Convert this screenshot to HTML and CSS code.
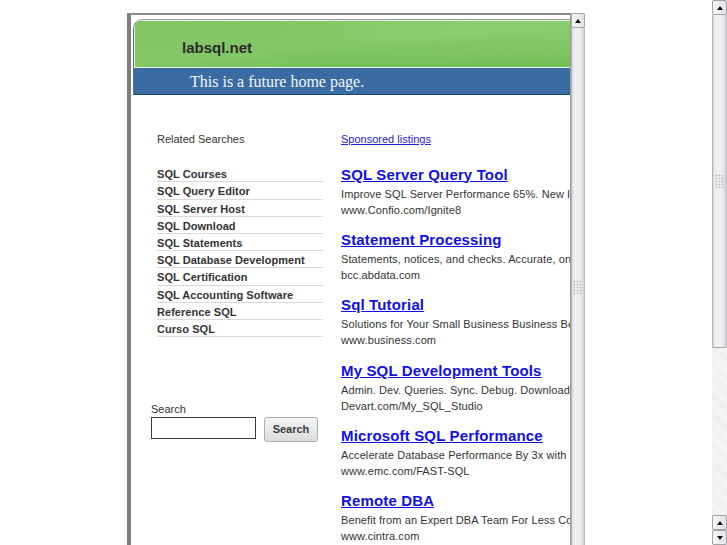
FILE: index.html
```html
<!DOCTYPE html>
<html lang="en">
<head>
<meta charset="utf-8">
<title>labsql.net</title>
<link rel="stylesheet" href="styles.css">
</head>
<body>
<div class="page">
  <div class="main">
    <div class="frame">
      <div class="viewport">
        <div class="banner">
          <div class="banner-top">labsql.net</div>
          <div class="banner-bar">This is a future home page.</div>
        </div>
        <div class="columns">
          <div class="left">
            <div class="related-title">Related Searches</div>
            <ul class="related">
              <li><a href="#">SQL Courses</a></li>
              <li><a href="#">SQL Query Editor</a></li>
              <li><a href="#">SQL Server Host</a></li>
              <li><a href="#">SQL Download</a></li>
              <li><a href="#">SQL Statements</a></li>
              <li><a href="#">SQL Database Development</a></li>
              <li><a href="#">SQL Certification</a></li>
              <li><a href="#">SQL Accounting Software</a></li>
              <li><a href="#">Reference SQL</a></li>
              <li><a href="#">Curso SQL</a></li>
            </ul>
            <form class="search">
              <label class="search-label">Search</label>
              <div class="search-row">
                <input class="search-input" type="text">
                <button class="search-btn" type="button">Search</button>
              </div>
            </form>
          </div>
          <div class="right">
            <a class="sponsored" href="#">Sponsored listings</a>
            <div class="ads">
              <div class="ad">
                <a class="ad-title" href="#">SQL Server Query Tool</a>
                <div class="ad-desc">Improve SQL Server Performance 65%. New Ignite 8 Free Trial Download</div>
                <div class="ad-url">www.Confio.com/Ignite8</div>
              </div>
              <div class="ad">
                <a class="ad-title" href="#">Statement Processing</a>
                <div class="ad-desc">Statements, notices, and checks. Accurate, on time, cost effective.</div>
                <div class="ad-url">bcc.abdata.com</div>
              </div>
              <div class="ad">
                <a class="ad-title" href="#">Sql Tutorial</a>
                <div class="ad-desc">Solutions for Your Small Business Business Benefits</div>
                <div class="ad-url">www.business.com</div>
              </div>
              <div class="ad">
                <a class="ad-title" href="#">My SQL Development Tools</a>
                <div class="ad-desc">Admin. Dev. Queries. Sync. Debug. Download</div>
                <div class="ad-url">Devart.com/My_SQL_Studio</div>
              </div>
              <div class="ad">
                <a class="ad-title" href="#">Microsoft SQL Performance</a>
                <div class="ad-desc">Accelerate Database Performance By 3x with EMC FAST</div>
                <div class="ad-url">www.emc.com/FAST-SQL</div>
              </div>
              <div class="ad">
                <a class="ad-title" href="#">Remote DBA</a>
                <div class="ad-desc">Benefit from an Expert DBA Team For Less Cost</div>
                <div class="ad-url">www.cintra.com</div>
              </div>
            </div>
          </div>
        </div>
      </div>
      <div class="vscroll frame-scroll">
        <div class="sb-btn"><span class="tri-up"></span></div>
        <div class="sb-thumb"><span class="grip"></span></div>
      </div>
    </div>
  </div>
  <div class="vscroll page-scroll">
    <div class="sb-btn"><span class="tri-up"></span></div>
    <div class="sb-thumb page-thumb"><span class="grip"></span></div>
    <div class="sb-track"></div>
    <div class="sb-btn"><span class="tri-up"></span></div>
    <div class="sb-btn"><span class="tri-down"></span></div>
  </div>
</div>
</body>
</html>
```
FILE: styles.css
```css
html, body {
  margin: 0;
  padding: 0;
  height: 545px;
  overflow: hidden;
  background: #ffffff;
  font-family: "Liberation Sans", Arial, sans-serif;
  color: #333333;
}

.page {
  display: flex;
  height: 545px;
}

.main {
  flex: 1;
  padding: 13px 0 0 127px;
  box-sizing: border-box;
  min-width: 0;
}

.frame {
  display: flex;
  width: 458px;
  height: 532px;
}

.viewport {
  flex: 1;
  min-width: 0;
  overflow: hidden;
  background: #ffffff;
  border-top: 2px solid #8c8c8c;
  border-left: 4px solid #7e7e7e;
}

/* banner */
.banner {
  margin: 4px 0 0 2px;
  width: 470px;
  border-top: 1px solid #9a9a9a;
  border-left: 1px solid #6a6a6a;
  border-top-left-radius: 10px;
  overflow: hidden;
}

.banner-top {
  height: 39px;
  padding: 8px 0 0 48px;
  line-height: 39px;
  font-size: 15px;
  font-weight: bold;
  color: #2b2b2b;
  background:
    radial-gradient(ellipse 240px 34px at 82% 18%, rgba(156, 214, 134, 0.45), rgba(156, 214, 134, 0) 100%),
    linear-gradient(174deg, #80c664 0%, #82c866 48%, #7ac35d 60%, #76c058 100%);
  box-shadow: inset 1px 1px 0 #e4f3dc;
  border-bottom: 1px solid #eef6ea;
}

.banner-bar {
  height: 26px;
  padding-left: 56px;
  line-height: 27px;
  font-family: "Liberation Serif", "Times New Roman", serif;
  font-size: 16px;
  color: #f4f6fa;
  background: #3a6ca3;
  border-bottom: 1px solid #1f446e;
}

/* columns */
.columns {
  display: flex;
  gap: 18px;
  padding: 37px 0 0 20px;
}

.left {
  flex: 0 0 172px;
  width: 172px;
}

.related-title {
  padding-left: 6px;
  font-size: 11px;
  line-height: 15px;
  color: #333333;
}

.related {
  list-style: none;
  margin: 18.3px 0 0 6px;
  padding: 0;
}

.related li {
  height: 16.2px;
  line-height: 16.2px;
  border-bottom: 1px solid #d9d9d9;
}

.related a {
  font-size: 11px;
  font-weight: bold;
  color: #333333;
  text-decoration: none;
  letter-spacing: 0.05px;
}

.search {
  margin-top: 64.7px;
}

.search-label {
  display: block;
  font-size: 11px;
  line-height: 14px;
  color: #333333;
}

.search-row {
  display: flex;
  align-items: flex-start;
  gap: 8px;
  margin-top: 1px;
}

.search-input {
  width: 105px;
  height: 22px;
  box-sizing: border-box;
  margin: 0;
  padding: 0 3px;
  border: 1px solid #3c3c3c;
  background: #ffffff;
}

.search-btn {
  width: 54px;
  height: 25px;
  margin: 0;
  padding: 0;
  box-sizing: border-box;
  font-family: "Liberation Sans", Arial, sans-serif;
  font-size: 11px;
  font-weight: bold;
  color: #3a3a3a;
  background: linear-gradient(#f4f4f4, #dcdcdc);
  border: 1px solid #adadad;
  border-radius: 3px;
}

/* right column */
.right {
  flex: 0 0 340px;
  white-space: nowrap;
}

.sponsored {
  display: block;
  font-size: 11px;
  line-height: 15px;
  color: #2222cc;
  text-decoration: underline;
}

.ads {
  margin-top: 16.5px;
}

.ad {
  margin-bottom: 11.4px;
}

.ad-title {
  display: inline-block;
  font-size: 15px;
  line-height: 22px;
  font-weight: bold;
  color: #1010e6;
  text-decoration: underline;
  letter-spacing: 0.15px;
}

.ad-desc,
.ad-url {
  font-size: 11px;
  line-height: 16px;
  color: #333333;
  letter-spacing: 0.1px;
}

/* scrollbars */
.vscroll {
  flex: 0 0 15px;
  width: 15px;
  display: flex;
  flex-direction: column;
  box-sizing: border-box;
}

.frame-scroll {
  background: #d8d8dc;
  border-left: 1px solid #9c9c9c;
}

.page-scroll {
  height: 545px;
  background: #e6e6e8;
}

.sb-btn {
  flex: 0 0 15px;
  height: 15px;
  box-sizing: border-box;
  display: flex;
  align-items: center;
  justify-content: center;
  border: 1px solid #a4a4a8;
  border-radius: 2px;
  background: linear-gradient(to right, #f7f7f9, #e2e2e6);
}

.tri-up {
  width: 0;
  height: 0;
  border-left: 3.5px solid transparent;
  border-right: 3.5px solid transparent;
  border-bottom: 4px solid #111111;
}

.tri-down {
  width: 0;
  height: 0;
  border-left: 3.5px solid transparent;
  border-right: 3.5px solid transparent;
  border-top: 4px solid #111111;
}

.sb-thumb {
  flex: 1;
  display: flex;
  align-items: center;
  justify-content: center;
  box-sizing: border-box;
  border-left: 1px solid #b4b4b8;
  border-right: 1px solid #bdbdc1;
  background: linear-gradient(to right, #dcdce0 0%, #f1f1f5 25%, #eeeef2 70%, #d2d2d6 100%);
}

.page-thumb {
  flex: 0 0 333px;
  border-bottom: 1px solid #a8a8ac;
  border-radius: 0 0 2px 2px;
}

.grip {
  width: 10px;
  height: 14px;
  background-image: radial-gradient(circle, #c4c4c8 0.8px, rgba(0, 0, 0, 0) 1.2px);
  background-size: 3px 3px;
}

.sb-track {
  flex: 1;
  background:
    repeating-linear-gradient(45deg, #ededee 0 1px, #f7f7f8 1px 2px);
}
```
